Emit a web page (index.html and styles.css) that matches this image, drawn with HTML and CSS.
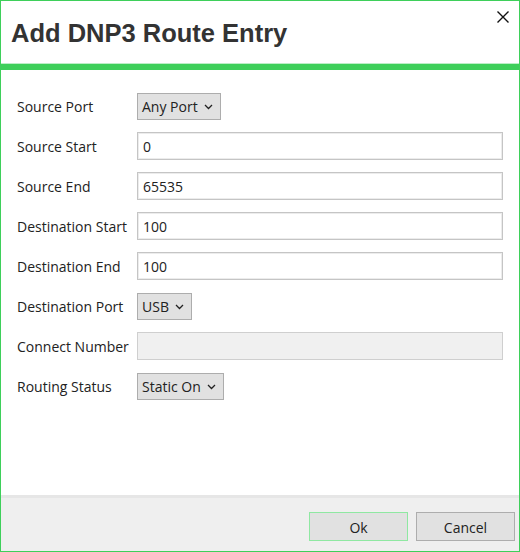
FILE: index.html
```html
<!DOCTYPE html>
<html>
<head>
<meta charset="utf-8">
<link rel="stylesheet" href="styles.css">
</head>
<body>
<div class="dialog">
  <div class="header">
    <h1 class="title">Add DNP3 Route Entry</h1>
    <svg class="close" width="14" height="14" viewBox="0 0 14 14"><path d="M1.5 1.5 L12.5 12.5 M12.5 1.5 L1.5 12.5" stroke="#111" stroke-width="1.4" fill="none"/></svg>
  </div>
  <div class="accent"></div>
  <div class="body">
    <div class="row">
      <span class="label">Source Port</span>
      <span class="select">Any Port <svg class="chev" width="9" height="6" viewBox="0 0 9 6"><path d="M1 1 L4.5 4.5 L8 1" fill="none" stroke="#222" stroke-width="1.3"/></svg></span>
    </div>
    <div class="row">
      <span class="label">Source Start</span>
      <span class="input">0</span>
    </div>
    <div class="row">
      <span class="label">Source End</span>
      <span class="input">65535</span>
    </div>
    <div class="row">
      <span class="label">Destination Start</span>
      <span class="input">100</span>
    </div>
    <div class="row">
      <span class="label">Destination End</span>
      <span class="input">100</span>
    </div>
    <div class="row">
      <span class="label">Destination Port</span>
      <span class="select">USB <svg class="chev" width="9" height="6" viewBox="0 0 9 6"><path d="M1 1 L4.5 4.5 L8 1" fill="none" stroke="#222" stroke-width="1.3"/></svg></span>
    </div>
    <div class="row">
      <span class="label">Connect Number</span>
      <span class="input disabled"></span>
    </div>
    <div class="row">
      <span class="label">Routing Status</span>
      <span class="select">Static On <svg class="chev" width="9" height="6" viewBox="0 0 9 6"><path d="M1 1 L4.5 4.5 L8 1" fill="none" stroke="#222" stroke-width="1.3"/></svg></span>
    </div>
  </div>
  <div class="footer">
    <span class="btn ok">Ok</span>
    <span class="btn">Cancel</span>
  </div>
</div>
</body>
</html>
```
FILE: styles.css
```css
html, body {
  margin: 0;
  padding: 0;
  background: #fff;
}
.dialog {
  width: 518px;
  height: 550px;
  border: 1px solid #3ecf5a;
  display: flex;
  flex-direction: column;
  font-family: "Open Sans", "Noto Sans", sans-serif;
  color: #222;
}
.header {
  height: 62px;
  display: flex;
  justify-content: space-between;
  align-items: flex-start;
  border-bottom: 1px solid #bdeec7;
}
.title {
  margin: 17px 0 0 10px;
  font-family: "Liberation Sans", Arial, sans-serif;
  font-weight: bold;
  font-size: 25.5px;
  color: #333;
  line-height: 30px;
}
.close {
  margin: 9px 9px 0 0;
}
.accent {
  height: 6px;
  background: #3ecf5a;
}
.body {
  flex: 1;
  padding: 22px 16px 0 16px;
  display: flex;
  flex-direction: column;
  gap: 12px;
}
.row {
  display: flex;
  align-items: center;
  height: 28px;
}
.label {
  width: 120px;
  font-size: 14px;
}
.select {
  height: 25px;
  border: 1px solid #adadad;
  background: #e1e1e1;
  display: flex;
  align-items: center;
  gap: 6px;
  padding: 0 7px 0 4px;
  font-size: 14px;
}
.chev {
  margin-top: 1px;
}
.input {
  flex: 1;
  height: 26px;
  border: 1px solid #c5c5c5;
  box-shadow: inset 0 0 0 1px #ececec;
  display: flex;
  align-items: center;
  padding-left: 5px;
  font-size: 14px;
}
.input.disabled {
  background: #f0f0f0;
  box-shadow: none;
  border-color: #cfcfcf;
}
.footer {
  height: 50px;
  background: #efefef;
  border-top: 3px solid #e6e6e6;
  display: flex;
  justify-content: flex-end;
  align-items: center;
  gap: 8px;
  padding: 3px 4px 0 0;
}
.btn {
  width: 97px;
  border: 1px solid #adadad;
  background: #e1e1e1;
  display: flex;
  align-items: center;
  justify-content: center;
  padding-top: 2px;
  box-sizing: content-box;
  height: 25px;
  font-size: 14px;
}
.btn.ok {
  border-color: #8fe8a2;
}
```
